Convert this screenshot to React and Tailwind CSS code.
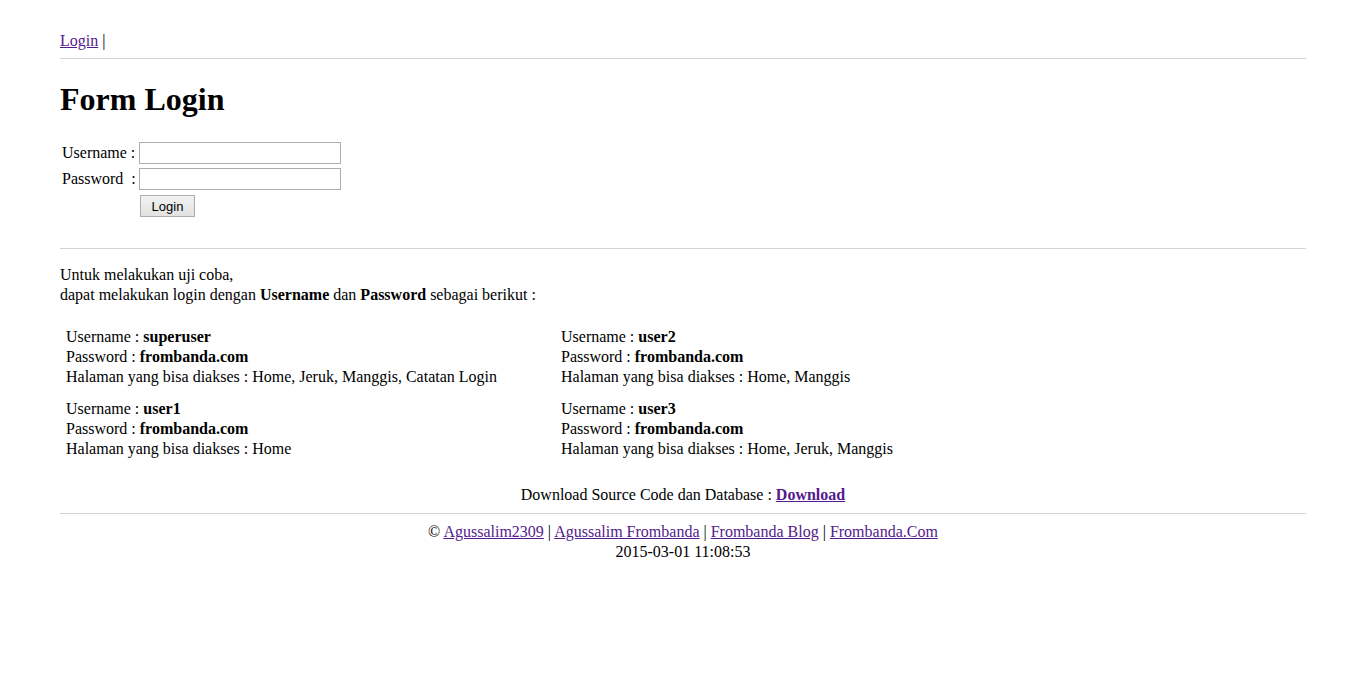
import React from "react";

const accounts = [
  { user: "superuser", pages: "Home, Jeruk, Manggis, Catatan Login" },
  { user: "user2", pages: "Home, Manggis" },
  { user: "user1", pages: "Home" },
  { user: "user3", pages: "Home, Jeruk, Manggis" },
];

function App() {
  return (
    <div className="min-h-screen bg-white text-black font-['Liberation_Serif',_'Times_New_Roman',_serif] text-base leading-5">
      <div className="mx-[60px] pt-[31px]">
        {/* Top nav */}
        <div>
          <a href="#" className="text-[#551a8b] underline">Login</a> |
        </div>
        <div className="mt-[7px] h-px bg-[#d3d3d3]" />

        <h1 className="mt-[22px] text-[32px] leading-[37px] font-bold">Form Login</h1>

        {/* Form */}
        <div className="mt-[24px] ml-[2px] grid grid-cols-[77px_202px] gap-y-[4px] items-center">
          <span>Username :</span>
          <input className="h-[22px] border border-[#abadb3] px-1 outline-none" />
          <span>Password &nbsp;:</span>
          <input type="password" className="h-[22px] border border-[#abadb3] px-1 outline-none" />
          <span />
          <button
            type="button"
            className="mt-[1px] ml-px w-[55px] h-[22px] border border-[#acacac] bg-gradient-to-b from-[#f2f2f2] to-[#e2e2e2] text-[13px] font-['Liberation_Sans',_Arial,_sans-serif] leading-none"
          >
            Login
          </button>
        </div>

        <div className="mt-[31px] h-px bg-[#d3d3d3]" />

        {/* Info */}
        <p className="mt-[16px]">
          Untuk melakukan uji coba,
          <br />
          dapat melakukan login dengan <b>Username</b> dan <b>Password</b> sebagai berikut :
        </p>

        <div className="mt-[22px] ml-[6px] grid grid-cols-[495px_495px] gap-y-[12px]">
          {accounts.map(a => (
            <div key={a.user}>
              <div>Username : <b>{a.user}</b></div>
              <div>Password : <b>frombanda.com</b></div>
              <div>Halaman yang bisa diakses : {a.pages}</div>
            </div>
          ))}
        </div>

        <div className="mt-[26px] text-center">
          Download Source Code dan Database : <a href="#" className="text-[#551a8b] underline font-bold">Download</a>
        </div>

        <div className="mt-[8px] h-px bg-[#d3d3d3]" />

        {/* Footer */}
        <div className="mt-[8px] text-center">
          <div>
            © <a href="#" className="text-[#551a8b] underline">Agussalim2309</a> |{" "}
            <a href="#" className="text-[#551a8b] underline">Agussalim Frombanda</a> |{" "}
            <a href="#" className="text-[#551a8b] underline">Frombanda Blog</a> |{" "}
            <a href="#" className="text-[#551a8b] underline">Frombanda.Com</a>
          </div>
          <div>2015-03-01 11:08:53</div>
        </div>
      </div>
    </div>
  );
}

export default App;
